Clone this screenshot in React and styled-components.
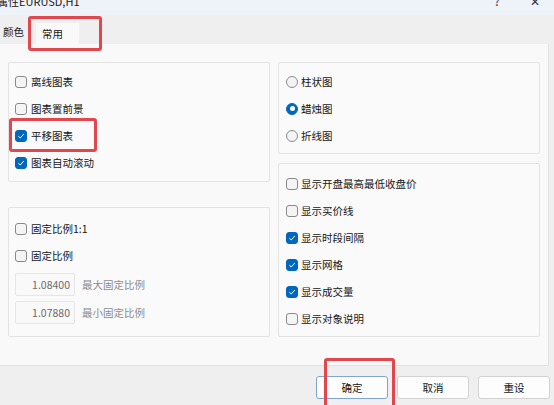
import React from 'react'
import styled, { createGlobalStyle } from 'styled-components'

const Global = createGlobalStyle`
  html, body {
    margin: 0;
    padding: 0;
    background: #efefef;
    overflow: hidden;
  }
  body {
    font-family: "Noto Sans CJK SC", "Noto Sans", sans-serif;
    font-size: 10.5px;
    color: #161616;
  }
`

const Window = styled.div`
  position: relative;
  width: 554px;
  height: 405px;
  display: flex;
  flex-direction: column;
  background: #efefef;
  overflow: hidden;
`

const TitleBar = styled.div`
  height: 15px;
  flex: none;
  background: #eef2f9;
  display: flex;
  align-items: flex-start;
  overflow: hidden;
  font-size: 11px;
  line-height: 11px;
`

const Title = styled.div`
  margin: -4px 0 0 -3px;
  flex: 1;
`

const TitleIcon = styled.div`
  margin-top: -5px;
  width: 38px;
  text-align: center;
  font-size: 12px;
  color: #333;
`

const TabBar = styled.div`
  height: 29px;
  flex: none;
  display: flex;
  align-items: flex-end;
  padding-left: 3px;
  gap: 12px;
`

const Tab = styled.div`
  height: 21px;
  display: flex;
  align-items: center;
  padding: ${p => (p.$active ? '0 16px 0 6px' : '0')};
  margin-bottom: ${p => (p.$active ? '0' : '2px')};
  background: ${p => (p.$active ? '#f9f9f9' : 'transparent')};
`

const Panel = styled.div`
  height: 322px;
  width: 549px;
  box-sizing: border-box;
  flex: none;
  background: #f9f9f9;
  border-right: 1px solid #e2e2e2;
  border-bottom: 1px solid #e2e2e2;
  padding: 18px 0 0 8px;
  display: grid;
  grid-template-columns: 262px 262px;
  column-gap: 8px;
  align-items: start;
`

const Column = styled.div`
  display: flex;
  flex-direction: column;
  justify-content: ${p => p.$justify || 'flex-start'};
  gap: ${p => p.$gap || 0}px;
  height: 275px;
`

const Group = styled.div`
  box-sizing: border-box;
  height: ${p => p.$h}px;
  border: 1px solid #e3e3e3;
  border-radius: 2px;
  background: #fafafa;
  padding: ${p => p.$pt || 5}px 6px 0 ${p => p.$pl || 6}px;
  display: flex;
  flex-direction: column;
`

const Row = styled.div`
  height: 27px;
  display: flex;
  align-items: center;
  gap: ${p => p.$gap || 4}px;
`

const Box = styled.span`
  width: 12px;
  height: 12px;
  box-sizing: border-box;
  border-radius: 3px;
  border: 1px solid ${p => (p.$on ? '#0067c0' : '#8a8a8a')};
  background: ${p => (p.$on ? '#0067c0' : '#f4f4f4')};
  display: flex;
  align-items: center;
  justify-content: center;
  flex: none;
`

const Radio = styled.span`
  width: 12px;
  height: 12px;
  box-sizing: border-box;
  border-radius: 50%;
  border: 1px solid ${p => (p.$on ? '#0067c0' : '#8a8a8a')};
  background: ${p => (p.$on ? '#0067c0' : '#f4f4f4')};
  display: flex;
  align-items: center;
  justify-content: center;
  flex: none;
  &::after {
    content: '';
    display: ${p => (p.$on ? 'block' : 'none')};
    width: 5px;
    height: 5px;
    border-radius: 50%;
    background: #fff;
  }
`

const InputRow = styled.div`
  display: flex;
  align-items: center;
  gap: 7px;
  margin-top: ${p => p.$mt}px;
`

const NumInput = styled.div`
  width: 60px;
  height: 23px;
  box-sizing: border-box;
  border: 1px solid #e6e6e6;
  border-radius: 2px;
  background: #f9f9f9;
  color: #6b6b6b;
  display: flex;
  align-items: center;
  justify-content: flex-end;
  padding-right: 4px;
`

const Hint = styled.span`
  color: #8c8c8c;
`

const Footer = styled.div`
  flex: 1;
  display: flex;
  justify-content: flex-end;
  align-items: flex-start;
  padding: 10px 4px 0 0;
  gap: 9px;
`

const Button = styled.div`
  width: 72px;
  height: 23px;
  box-sizing: border-box;
  border-radius: 3px;
  border: 1px solid ${p => (p.$primary ? '#7ea6d4' : '#d2d2d2')};
  background: #fdfdfd;
  display: flex;
  align-items: center;
  justify-content: center;
`

const Mark = styled.div`
  position: absolute;
  left: ${p => p.$x}px;
  top: ${p => p.$y}px;
  width: ${p => p.$w}px;
  height: ${p => p.$h}px;
  box-sizing: border-box;
  border: 3px solid #e2474d;
  border-radius: 3px;
  pointer-events: none;
`

const Check = () => (
  <svg width="8" height="8" viewBox="0 0 8 8">
    <path d="M1.3 4.2 L3.2 6 L6.8 2" fill="none" stroke="#fff" strokeWidth="1" />
  </svg>
)

const CheckItem = ({ on, label, gap }) => (
  <Row $gap={gap}>
    <Box $on={on}>{on && <Check />}</Box>
    <span>{label}</span>
  </Row>
)

const RadioItem = ({ on, label }) => (
  <Row $gap={3}>
    <Radio $on={on} />
    <span>{label}</span>
  </Row>
)

export default function App() {
  return (
    <Window>
      <Global />
      <TitleBar>
        <Title>属性EURUSD,H1</Title>
        <TitleIcon>?</TitleIcon>
        <TitleIcon>✕</TitleIcon>
      </TitleBar>
      <TabBar>
        <Tab>颜色</Tab>
        <Tab $active>常用</Tab>
      </TabBar>
      <Panel>
        <Column $justify="space-between">
          <Group $h={120}>
            <CheckItem label="离线图表" />
            <CheckItem label="图表置前景" />
            <CheckItem on label="平移图表" />
            <CheckItem on label="图表自动滚动" />
          </Group>
          <Group $h={130} $pt={7}>
            <CheckItem label="固定比例1:1" />
            <CheckItem label="固定比例" />
            <InputRow $mt={4}>
              <NumInput>1.08400</NumInput>
              <Hint>最大固定比例</Hint>
            </InputRow>
            <InputRow $mt={5}>
              <NumInput>1.07880</NumInput>
              <Hint>最小固定比例</Hint>
            </InputRow>
          </Group>
        </Column>
        <Column $gap={9}>
          <Group $h={92} $pl={7}>
            <RadioItem label="柱状图" />
            <RadioItem on label="蜡烛图" />
            <RadioItem label="折线图" />
          </Group>
          <Group $h={174} $pl={7} $pt={6}>
            <CheckItem gap={3} label="显示开盘最高最低收盘价" />
            <CheckItem gap={3} label="显示买价线" />
            <CheckItem gap={3} on label="显示时段间隔" />
            <CheckItem gap={3} on label="显示网格" />
            <CheckItem gap={3} on label="显示成交量" />
            <CheckItem gap={3} label="显示对象说明" />
          </Group>
        </Column>
      </Panel>
      <Footer>
        <Button $primary>确定</Button>
        <Button>取消</Button>
        <Button>重设</Button>
      </Footer>
      <Mark $x={28} $y={16} $w={74} $h={35} />
      <Mark $x={9} $y={118} $w={88} $h={34} />
      <Mark $x={324} $y={358} $w={71} $h={52} />
    </Window>
  )
}
